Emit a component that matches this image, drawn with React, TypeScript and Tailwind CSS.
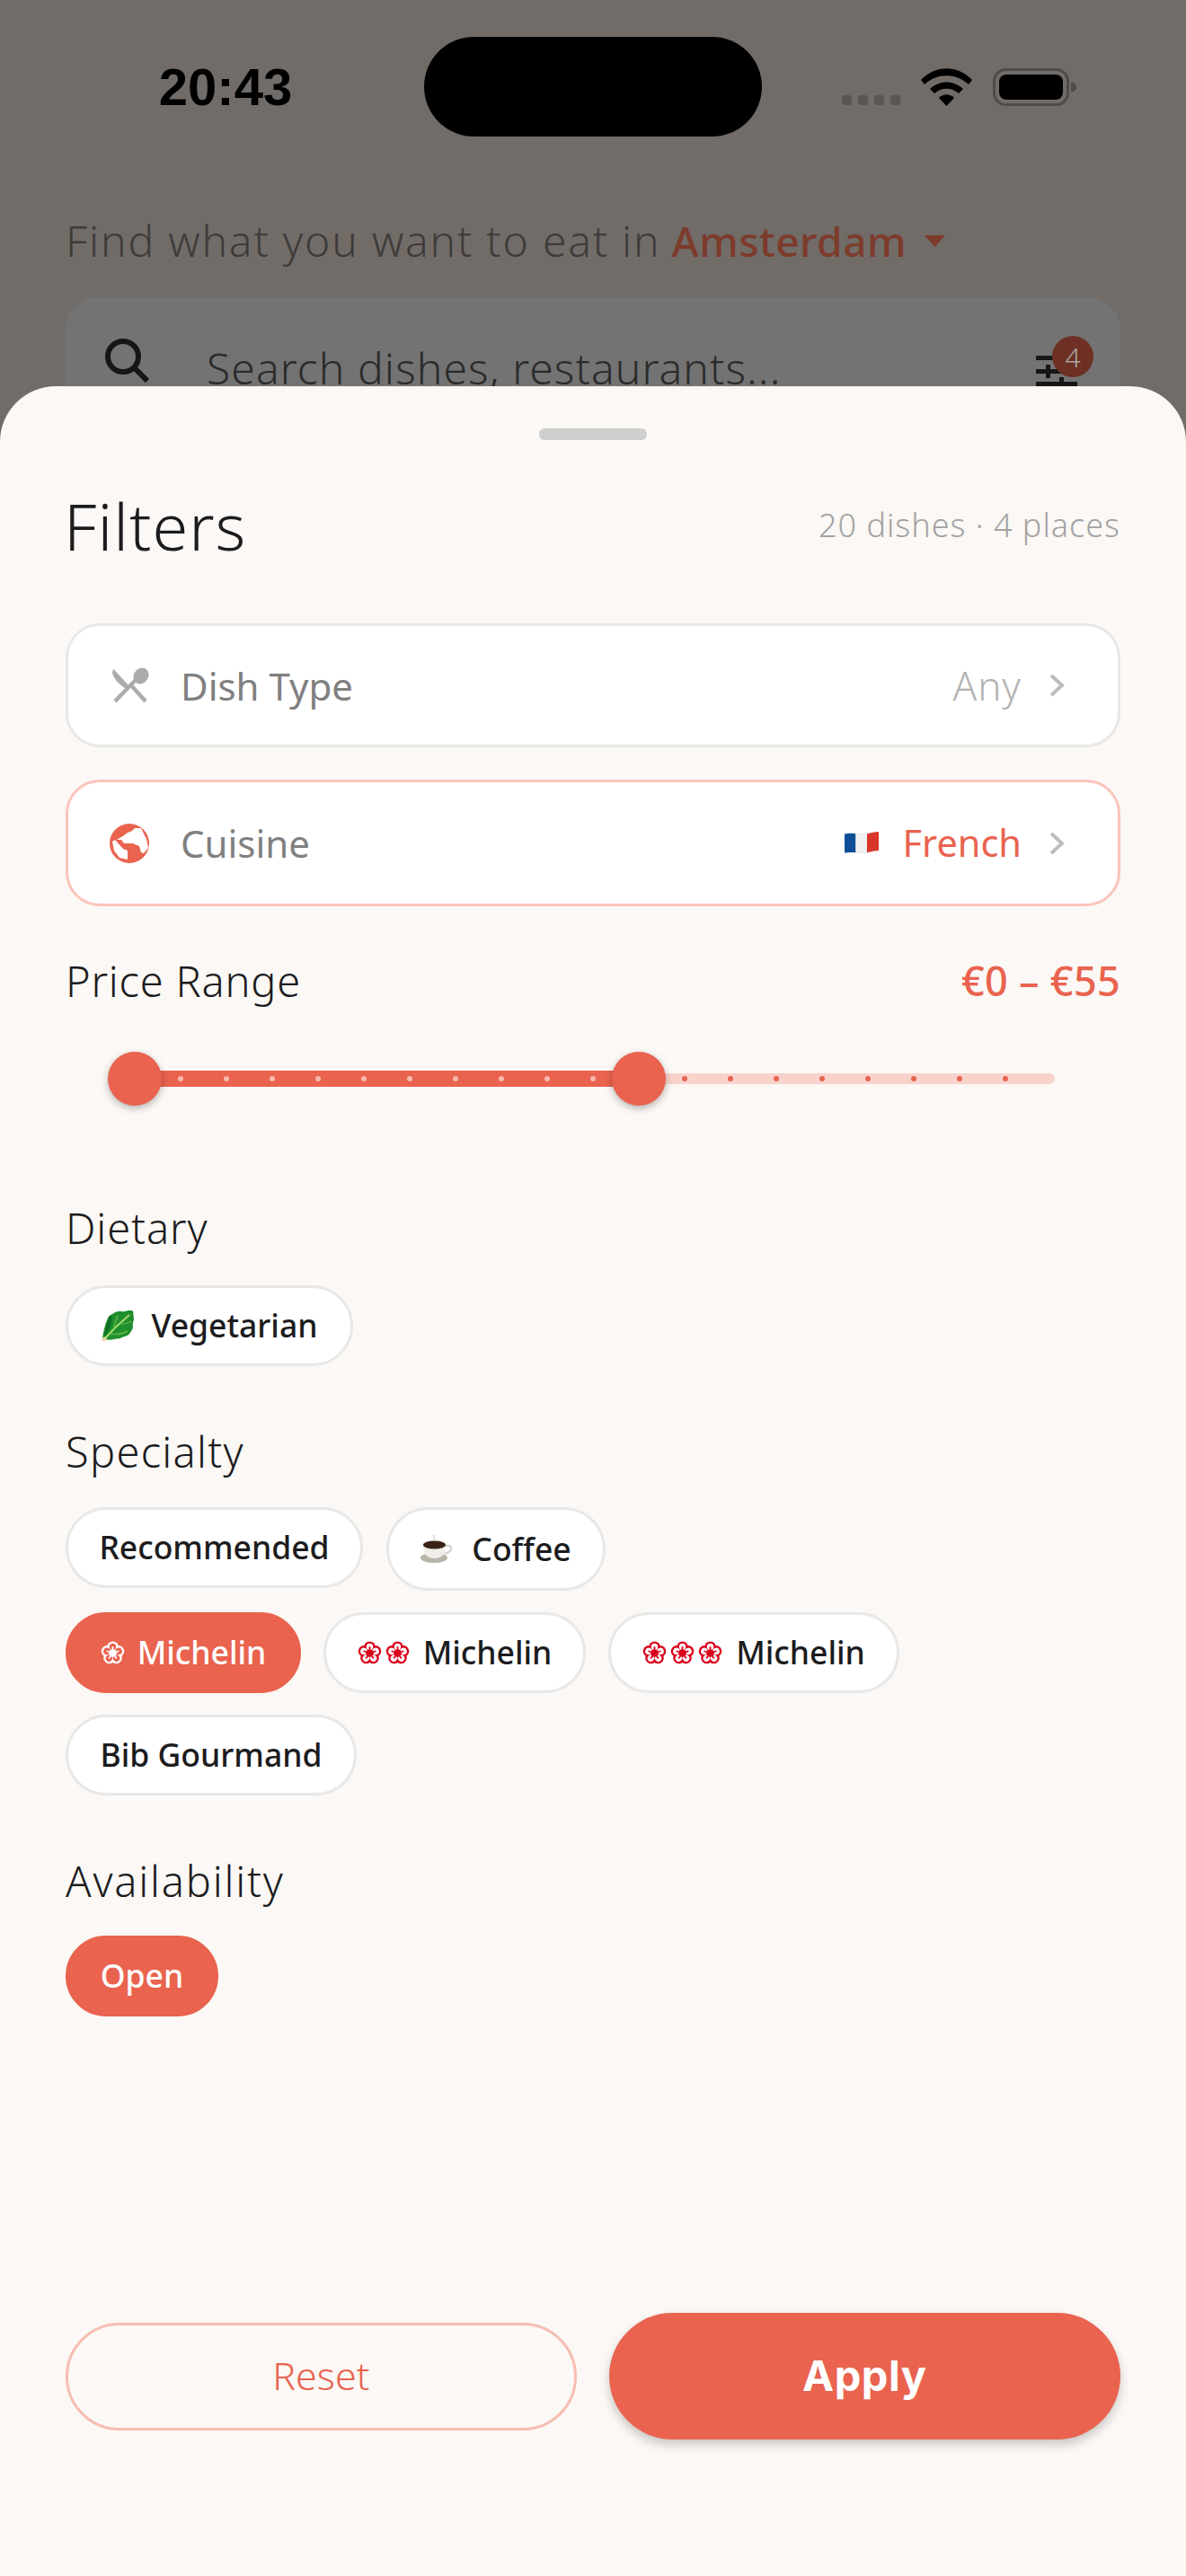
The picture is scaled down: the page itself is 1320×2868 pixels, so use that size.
import React from 'react';

const font = "font-['Noto_Sans',sans-serif]";

const Rosette = ({ color = '#d9001b', hole = '#ffffff' }: { color?: string; hole?: string }) => (
  <svg width="27" height="27" viewBox="0 0 24 24" className="shrink-0">
    {[0, 72, 144, 216, 288].map((a) => (
      <circle key={a} cx="12" cy="6" r="5.6" fill={color} transform={`rotate(${a} 12 12)`} />
    ))}
    {[0, 72, 144, 216, 288].map((a) => (
      <circle key={a} cx="12" cy="5.800" r="3.300" fill={hole} transform={`rotate(${a} 12 12)`} />
    ))}
    {[0, 72, 144, 216, 288].map((a) => (
      <path key={a} d="M11.200 12V5.500h1.600V12z" fill={color} transform={`rotate(${a} 12 12)`} />
    ))}
    <circle cx="12" cy="12" r="3.600" fill={color} />
  </svg>
);

const Chevron = () => (
  <svg width="17" height="26" viewBox="0 0 17 26" fill="none" className="shrink-0">
    <path d="M2 2l12 11L2 24" stroke="#bdbdbd" strokeWidth="4" />
  </svg>
);

const Cutlery = () => (
  <svg width="42" height="40" viewBox="0 0 42 40" className="shrink-0">
    <path d="M2 1.500L19 20l-3.200 3.400C8 19 2.200 12 1 6z" fill="#ababab" />
    <path d="M2.500 36L26 12l3 3L5.500 39.500z" fill="#ababab" />
    <ellipse cx="33" cy="9.500" rx="8" ry="9.500" transform="rotate(35 33 9.500)" fill="#ababab" />
    <path d="M20 21l3-3 16.500 18-3 3.500z" fill="#ababab" />
  </svg>
);

const Globe = () => (
  <svg width="44" height="44" viewBox="0 0 44 44" className="ml-[-2px] shrink-0">
    <circle cx="22" cy="22" r="22" fill="#e9634f" />
    <path d="M16 13l4-3 5-2 3-3h7l6 12 2 10-5 6-3-1-2-7-5-2-2-1H16l-3-4H8z" fill="#ffffff" />
    <path d="M3 20l3-2 9 10 5 2v10l-9-2-6-8z" fill="#ffffff" />
  </svg>
);

const Flag = () => (
  <svg width="38" height="27" viewBox="0 0 38 27" className="shrink-0">
    <path d="M0 3.500c4-1 8-.8 12.500-.3v21c-4.500-.4-8.500-.5-12.500 .3z" fill="#0d4f96" />
    <path d="M12.500 3.200c4.200.5 8.500.6 12.500 0v21c-4 .6-8.300.4-12.500 0z" fill="#f1f1f1" stroke="#d8d8d8" strokeWidth="0.500" />
    <path d="M25 3.200c4.500-.7 9-2.200 13-2.200v21c-4 0-8.500 1.500-13 2.200z" fill="#d9362b" />
  </svg>
);

const Leaf = () => (
  <svg width="36" height="35" viewBox="0 0 36 35" className="shrink-0">
    <path d="M1 31C2 24 4 14 8 7c2-3 5-3 7-5 4-2 8 0 11-1 3-1 7-2 9 0 1 3 0 5 1 8 0 4-2 5-1 9 0 3-2 5-4 8-2 3-5 2-8 4-3 2-6 1-9 2-4 1-9 1-13-1z" fill="#1f8f2c" />
    <path d="M8 7C5 15 4 24 3 31c5-7 8-15 9-25z" fill="#0d6f25" />
    <path d="M3 32C10 24 20 14 31 5" stroke="#a6d86e" strokeWidth="2.200" fill="none" />
    <path d="M9 26c6 1 13 1 20-3M14 20c0-4 2-9 4-14M20 15c4 0 10-1 13-3" stroke="#63b648" strokeWidth="1.500" fill="none" />
    <path d="M0 32l3-3 3 3-3 3z" fill="#e6d6aa" />
  </svg>
);

const Coffee = () => (
  <svg width="36" height="31" viewBox="0 0 36 31" className="shrink-0">
    <path d="M15 0c-2 2 2 3 0 6" stroke="#dcdcdc" strokeWidth="2" fill="none" />
    <ellipse cx="15" cy="25.500" rx="15" ry="5.500" fill="#b8b5ab" />
    <path d="M3 10h25c0 9-2 16-12.500 16S3 19 3 10z" fill="#f0eeea" />
    <path d="M28 12c8-2 9 6-1 9" stroke="#d0cec8" strokeWidth="2" fill="none" />
    <ellipse cx="15.500" cy="11" rx="12.500" ry="4.500" fill="#3a2216" />
  </svg>
);

const Label = ({ children, tracking }: { children: React.ReactNode; tracking: string }) => (
  <span className={`text-[47px] leading-[60px] font-light text-[#1c1c1e] ${tracking}`}>{children}</span>
);

const Chip = ({
  width,
  active,
  children,
}: {
  width: string;
  active?: boolean;
  children: React.ReactNode;
}) => (
  <div
    className={`${width} h-[90px] flex items-center justify-center rounded-full border-[3px] text-[35.5px] font-medium ${
      active ? 'bg-[#e9634f] border-[#e9634f] text-white' : 'bg-white border-[#e8e8e8] text-[#1c1c1e]'
    }`}
  >
    {children}
  </div>
);

export default function App() {
  return (
    <div className={`w-[1320px] h-[2868px] bg-[#716c68] flex flex-col overflow-hidden ${font}`}>
      {/* dimmed page behind the sheet */}
      <div className="h-[430px] shrink-0 overflow-hidden">
        <div className="flex items-center h-[111px] mt-[41px]">
          <div className="w-[472px] flex justify-center pl-[30px]">
            <span className="font-['Liberation_Sans',sans-serif] font-bold text-[58px] text-black">20:43</span>
          </div>
          <div className="w-[376px] h-[111px] rounded-full bg-black" />
          <div className="flex items-center ml-[89px]">
            <div className="flex gap-[7px] mt-[30px]">
              <div className="w-[11px] h-[11px] rounded-[3px] bg-[#5a5654]" />
              <div className="w-[11px] h-[11px] rounded-[3px] bg-[#5a5654]" />
              <div className="w-[11px] h-[11px] rounded-[3px] bg-[#5a5654]" />
              <div className="w-[11px] h-[11px] rounded-[3px] bg-[#5a5654]" />
            </div>
            <svg width="57" height="42" viewBox="0 0 57 42" className="ml-[23px]">
              <path d="M0 13C16-4 41-4 57 13l-4 5C39 5 18 5 4 18z" fill="#000" />
              <path d="M10 23c11-10 26-10 37 0l-5 5c-8-7-19-7-27 0z" fill="#000" />
              <path d="M20 33c5-5 12-5 17 0l-8.500 9z" fill="#000" />
            </svg>
            <svg width="93" height="42" viewBox="0 0 93 42" className="ml-[23px]">
              <rect x="1.500" y="1.500" width="82" height="39" rx="13" fill="none" stroke="#4f4b49" strokeWidth="3" />
              <rect x="7" y="7" width="71" height="28" rx="8" fill="#000" />
              <path d="M87 15c4 1 6 3 6 6s-2 5-6 6z" fill="#4f4b49" />
            </svg>
          </div>
        </div>
        <div className="mt-[85px] ml-[73px] flex items-center h-[62px] text-[#3f3b39]">
          <span className="text-[48px] font-light tracking-[1.8px]">Find what you want to eat in</span>
          <span className="ml-[12px] text-[46px] font-medium tracking-[0.5px] text-[#7d3b2c]">Amsterdam</span>
          <svg width="23" height="13" viewBox="0 0 23 13" className="ml-[20px]">
            <path d="M0 0h23L11.500 13z" fill="#7d3b2c" />
          </svg>
        </div>
        <div className="relative mt-[32px] mx-[73px] h-[160px] rounded-[36px] bg-[#737373] flex items-center pl-[43px]">
          <svg width="50" height="50" viewBox="0 0 50 50" fill="none" className="mt-[-20px]">
            <circle cx="21" cy="21" r="17" stroke="#161616" strokeWidth="6" />
            <path d="M33 33l15 15" stroke="#161616" strokeWidth="6" />
          </svg>
          <span className="ml-[64px] mt-[-2px] text-[48px] font-light text-[#2b2b2b] tracking-[1.1px]">
            Search dishes, restaurants...
          </span>
          <svg width="46" height="44" viewBox="0 0 46 44" className="absolute left-[1080px] top-[65px]">
            <rect x="0" y="0" width="46" height="5" fill="#161616" />
            <rect x="0" y="15" width="46" height="5" fill="#161616" />
            <rect x="0" y="29" width="46" height="5" fill="#161616" />
            <rect x="11" y="10" width="5" height="15" fill="#161616" />
            <rect x="26" y="24" width="5" height="15" fill="#161616" />
          </svg>
          <div className="absolute left-[1098px] top-[43px] w-[46px] h-[46px] rounded-full bg-[#6e3024] flex items-center justify-center text-[30px] font-light text-[#a8a4a2]">
            4
          </div>
        </div>
      </div>

      {/* sheet */}
      <div className="relative flex-1 flex flex-col rounded-t-[62px] bg-[#fbf8f5] px-[73px] pb-[152px]">
        <div className="mt-[47px] mx-auto w-[120px] h-[13px] rounded-[6px] bg-[#cfcfcf]" />

        <div className="mt-[55px] h-[80px] flex items-center justify-between">
          <span className="ml-[-2px] text-[72px] leading-[80px] font-light tracking-[1px] text-[#1c1c1e]">Filters</span>
          <span className="text-[36px] font-light text-[#a3a3a3] tracking-[1px]">20 dishes · 4 places</span>
        </div>

        <div className="mt-[69px] h-[138px] rounded-[38px] border-[3px] border-[#e8e8e8] bg-white flex items-center pl-[48px] pr-[59px]">
          <Cutlery />
          <span className="ml-[35px] text-[42px] text-[#808080]">Dish Type</span>
          <span className="ml-auto text-[44px] font-light tracking-[1px] text-[#b3b3b3]">Any</span>
          <div className="ml-[31px]">
            <Chevron />
          </div>
        </div>

        <div className="mt-[36px] h-[141px] rounded-[38px] border-[3px] border-[#fbc4bb] bg-white flex items-center pl-[48px] pr-[59px]">
          <Globe />
          <span className="ml-[35px] text-[42px] text-[#808080]">Cuisine</span>
          <div className="ml-auto">
            <Flag />
          </div>
          <span className="ml-[27px] text-[41.5px] text-[#e9634f]">French</span>
          <div className="ml-[31px]">
            <Chevron />
          </div>
        </div>

        <div className="mt-[53px] flex items-center justify-between">
          <Label tracking="tracking-[0.8px]">Price Range</Label>
          <span className="text-[45px] leading-[60px] font-medium tracking-[0.3px] text-[#e9634f]">€0 – €55</span>
        </div>

        {/* slider */}
        <div className="relative mt-[49px] ml-[47px] w-[1054px] h-[60px] flex items-center">
          <div className="ml-[30px] w-[561px] h-[18px] bg-[#e9634f]" />
          <div className="flex-1 h-[12px] rounded-r-full bg-[#f8d3cc]" />
          <div className="absolute left-[78px] top-[27px] flex gap-[45px]">
            {Array.from({ length: 19 }, (_, i) => (
              <div
                key={i}
                className={`w-[6px] h-[6px] rounded-full ${i < 11 ? 'bg-[#f8b9ae]' : 'bg-[#e9634f]'}`}
              />
            ))}
          </div>
          <div className="absolute left-0 top-0 w-[60px] h-[60px] rounded-full bg-[#e9634f] shadow-[0_3px_8px_rgba(0,0,0,0.28)]" />
          <div className="absolute left-[561px] top-0 w-[60px] h-[60px] rounded-full bg-[#e9634f] shadow-[0_3px_8px_rgba(0,0,0,0.28)]" />
        </div>

        <div className="mt-[106px] h-[60px]">
          <Label tracking="tracking-[0.9px]">Dietary</Label>
        </div>
        <div className="mt-[34px] flex">
          <Chip width="w-[320px]">
            <Leaf />
            <span className="ml-[20px]">Vegetarian</span>
          </Chip>
        </div>

        <div className="mt-[65px] h-[60px]">
          <Label tracking="tracking-[1.3px]">Specialty</Label>
        </div>
        <div className="mt-[32px] flex flex-wrap items-start gap-x-[26px] gap-y-[24px]">
          <Chip width="w-[331px]">Recommended</Chip>
          <div className="w-[244px] h-[93px] flex items-center justify-center rounded-full border-[3px] border-[#e8e8e8] bg-white text-[35.5px] font-medium text-[#1c1c1e]">
            <Coffee />
            <span className="ml-[21px]">Coffee</span>
          </div>
          <div className="w-full flex gap-[25px]">
            <Chip width="w-[262px]" active>
              <Rosette color="#ffffff" hole="#e9634f" />
              <span className="ml-[14px]">Michelin</span>
            </Chip>
            <Chip width="w-[292px]">
              <div className="flex gap-[4px]">
                <Rosette />
                <Rosette />
              </div>
              <span className="ml-[15px]">Michelin</span>
            </Chip>
            <Chip width="w-[324px]">
              <div className="flex gap-[4px]">
                <Rosette />
                <Rosette />
                <Rosette />
              </div>
              <span className="ml-[15px]">Michelin</span>
            </Chip>
          </div>
          <Chip width="w-[324px]">Bib Gourmand</Chip>
        </div>

        <div className="mt-[65px] h-[60px]">
          <Label tracking="tracking-[1.8px]">Availability</Label>
        </div>
        <div className="mt-[31px] flex">
          <Chip width="w-[170px]" active>
            Open
          </Chip>
        </div>

        <div className="mt-auto flex items-center gap-[36px]">
          <button className="w-[569px] h-[120px] rounded-full border-[3px] border-[#f7bdb3] text-[43px] font-light text-[#e9634f]">
            Reset
          </button>
          <button className="w-[570px] h-[141px] rounded-full bg-[#e9634f] font-['Inter',sans-serif] font-bold text-[47px] tracking-[0.5px] text-white shadow-[0_6px_12px_rgba(0,0,0,0.2)]">
            Apply
          </button>
        </div>
      </div>
    </div>
  );
}
